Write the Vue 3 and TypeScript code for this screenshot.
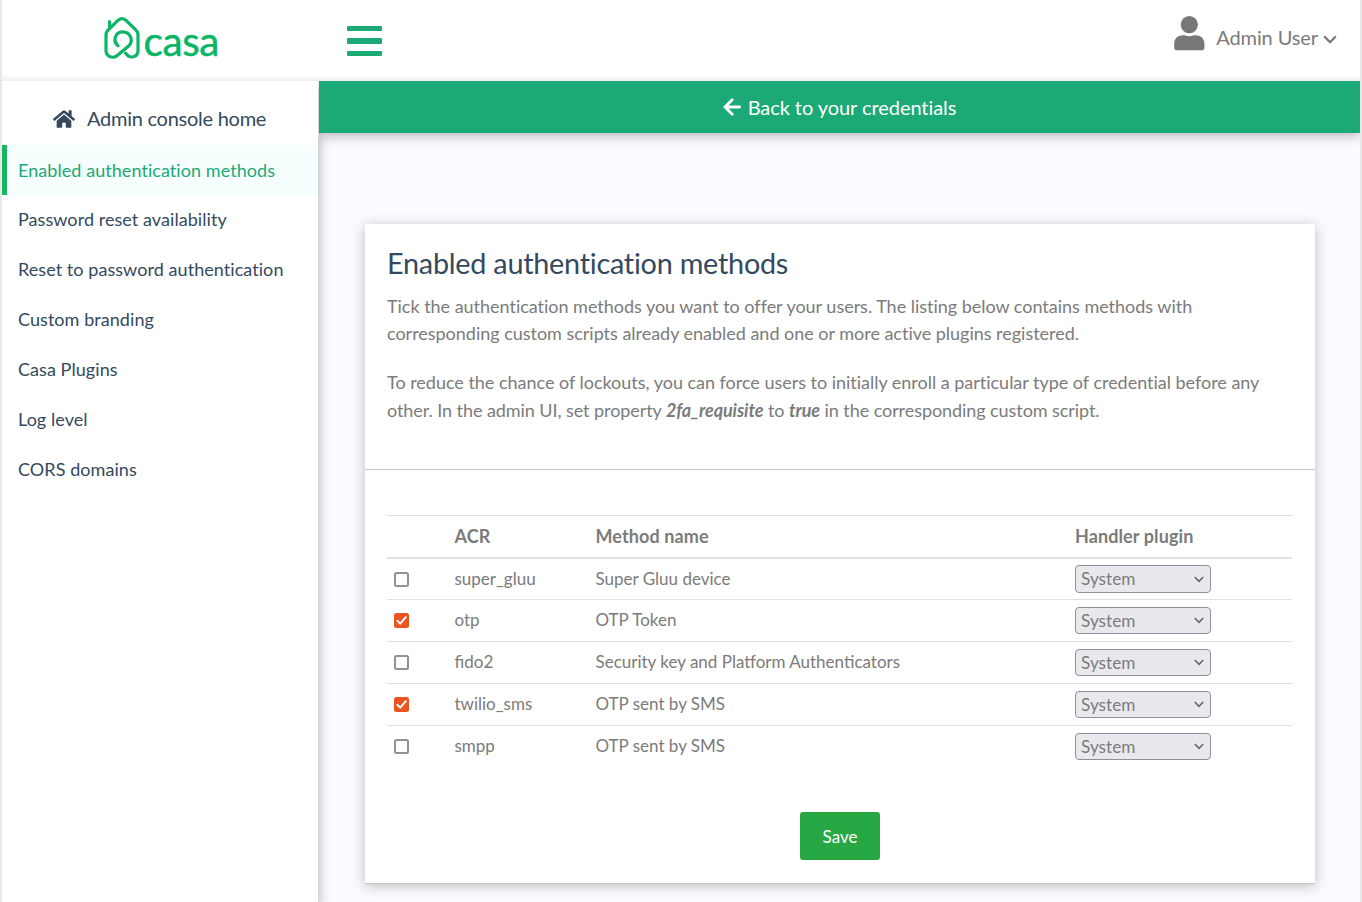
<script setup lang="ts">
import { ref } from 'vue'

interface Method {
  acr: string
  name: string
  enabled: boolean
  plugin: string
}

const links: string[] = [
  'Enabled authentication methods',
  'Password reset availability',
  'Reset to password authentication',
  'Custom branding',
  'Casa Plugins',
  'Log level',
  'CORS domains',
]
const active = ref(0)

const methods = ref<Method[]>([
  { acr: 'super_gluu', name: 'Super Gluu device', enabled: false, plugin: 'System' },
  { acr: 'otp', name: 'OTP Token', enabled: true, plugin: 'System' },
  { acr: 'fido2', name: 'Security key and Platform Authenticators', enabled: false, plugin: 'System' },
  { acr: 'twilio_sms', name: 'OTP sent by SMS', enabled: true, plugin: 'System' },
  { acr: 'smpp', name: 'OTP sent by SMS', enabled: false, plugin: 'System' },
])
</script>

<template>
  <div class="page">
    <header class="top">
      <div class="logo">
        <svg class="logo-mark" width="38" height="44" viewBox="0 0 38 44">
          <path
            d="M6.500 10.800V5.600M15 29.800C9.800 25.800 11.500 16.200 19.300 15.800C27.500 15.600 31 25 25.600 30L14.200 39.400C9.400 43.400 3 40.200 3 34.600V18.800Q3 16.200 5 14.200L15.200 4.200Q19 .9 22.800 4.200L33 14.200Q35 16.200 35 18.800V34.600C35 41.200 27 43.600 22.600 37.200"
          />
        </svg>
        <span class="logo-text">casa</span>
      </div>
      <button class="burger" aria-label="Menu"><i></i><i></i><i></i></button>
      <div class="user">
        <svg width="31" height="35" viewBox="0 0 31 35">
          <circle cx="15.300" cy="8.700" r="8.600" />
          <path d="M8.500 19.200H10.500Q15.300 21.400 20 19.200H22Q30.400 20 30.400 28V31.400Q30.400 34.200 27.400 34.200H3.200Q.2 34.200 .2 31.400V28Q.2 20 8.500 19.200Z" />
        </svg>
        <span class="user-name">Admin User</span>
        <svg class="caret" width="14" height="10" viewBox="0 0 14 10"><path d="M1.800 2L7 7.200L12.200 2" /></svg>
      </div>
    </header>

    <div class="body">
      <aside class="side">
        <a class="home">
          <svg width="22" height="20" viewBox="0 0 576 512" preserveAspectRatio="none">
            <path d="M280.400 148.300L96 300.100V464a16 16 0 0 0 16 16l112-.3a16 16 0 0 0 16-16V368a16 16 0 0 1 16-16h64a16 16 0 0 1 16 16v95.600a16 16 0 0 0 16 16l112 .4a16 16 0 0 0 16-16V300L295.700 148.300a12.200 12.200 0 0 0-15.300 0zM571.600 251.500L488 182.600V44a12 12 0 0 0-12-12h-56a12 12 0 0 0-12 12v72.600L318.500 43a48 48 0 0 0-61 0L4.300 251.500a12 12 0 0 0-1.600 16.900l25.500 31a12 12 0 0 0 16.900 1.600l235.200-193.700a12.200 12.200 0 0 1 15.300 0L530.900 301a12 12 0 0 0 16.900-1.600l25.500-31a12 12 0 0 0-1.700-16.900z" />
          </svg>
          <span>Admin console home</span>
        </a>
        <nav>
          <a v-for="(l, i) in links" :key="l" class="link" :class="{ active: i === active }" @click="active = i"><span>{{ l }}</span></a>
        </nav>
      </aside>

      <main class="main">
        <a class="back">
          <svg width="18" height="18" viewBox="0 0 18 18"><path d="M9.200 1.800L2 9L9.200 16.200M2.500 9H16.600" /></svg>
          <span>Back to your credentials</span>
        </a>

        <section class="card">
          <div class="intro">
            <h1>Enabled authentication methods</h1>
            <p>
              Tick the authentication methods you want to offer your users. The listing below contains methods with<br />
              corresponding custom scripts already enabled and one or more active plugins registered.
            </p>
            <p>
              To reduce the chance of lockouts, you can force users to initially enroll a particular type of credential before any<br />
              <span class="tight">other. In the admin UI, set property <b>2fa_requisite</b> to <b>true</b> in the corresponding custom script.</span>
            </p>
          </div>
          <div class="list">
            <div class="row head">
              <span></span><span>ACR</span><span>Method name</span><span>Handler plugin</span>
            </div>
            <div v-for="m in methods" :key="m.acr" class="row">
              <span class="check" :class="{ on: m.enabled }" role="checkbox" :aria-checked="m.enabled" @click="m.enabled = !m.enabled">
                <svg v-if="m.enabled" width="15" height="15" viewBox="0 0 15 15"><path d="M3.400 7.700L6.200 10.600L11.800 4.200" /></svg>
              </span>
              <span class="txt">{{ m.acr }}</span>
              <span class="txt">{{ m.name }}</span>
              <span class="select">
                <span>{{ m.plugin }}</span>
                <svg width="10" height="7" viewBox="0 0 10 7"><path d="M.8 1L5 5.400L9.200 1" /></svg>
              </span>
            </div>
          </div>
          <button class="save">Save</button>
        </section>
      </main>
    </div>
  </div>
</template>

<style>
body {
  margin: 0;
  overflow: hidden;
}
</style>

<style scoped>
* {
  box-sizing: border-box;
}
.page {
  width: 1362px;
  height: 902px;
  display: flex;
  flex-direction: column;
  overflow: hidden;
  border-left: 2px solid #e8e8e8;
  border-right: 2px solid #e8e8e8;
  background: #fafbff;
  font-family: Lato, sans-serif;
  color: #7b7b7b;
}
.top {
  height: 81px;
  flex: none;
  display: flex;
  align-items: flex-start;
  background: linear-gradient(#fff 74px, #fafafa 77px, #ededed);
}
.logo {
  display: flex;
  width: 345px;
  padding: 16px 0 0 101px;
}
.logo-mark {
  fill: none;
  stroke: #0ab566;
  stroke-width: 3.200;
  stroke-linecap: round;
  stroke-linejoin: round;
}
.logo-text {
  margin: -1px 0 0 2.500px;
  font-size: 40.500px;
  line-height: 52px;
  letter-spacing: -0.400px;
  color: #0ab566;
  -webkit-text-stroke: 0.5px #0ab566;
}
.burger {
  display: flex;
  flex-direction: column;
  gap: 7px;
  width: 35px;
  margin-top: 26px;
  padding: 0;
  border: 0;
  background: none;
}
.burger i {
  height: 5.400px;
  border-radius: 1px;
  background: #1ba975;
}
.user {
  display: flex;
  margin: 16px 23px 0 auto;
}
.user svg {
  fill: #777;
}
.user-name {
  margin: 7px 5px 0 11px;
  font-size: 20px;
  line-height: 28px;
  letter-spacing: -0.1px;
}
.user > svg:first-child {
  margin-right: 0.500px;
}
.user .caret {
  margin-top: 18.500px;
  fill: none;
  stroke: #777;
  stroke-width: 2.300;
  stroke-linecap: round;
}
.body {
  flex: 1;
  display: flex;
}
.side {
  width: 316px;
  margin-right: 1px;
  background: #fff;
  box-shadow: 2px 4px 10px rgba(0, 0, 0, 0.25);
  clip-path: inset(0 -20px 0 0);
  color: #34495e;
}
.home {
  height: 64px;
  display: flex;
  align-items: center;
  gap: 12px;
  padding: 12px 0 0 51px;
  font-size: 20px;
  letter-spacing: -0.260px;
}
.home span {
  padding-bottom: 2px;
}
.home svg {
  fill: #34495e;
}
.link {
  display: flex;
  align-items: center;
  height: 50px;
  padding-left: 16px;
  font-size: 18px;
  letter-spacing: 0.060px;
}
.link span {
  padding-bottom: 2px;
}
.link.active span {
  padding-bottom: 0;
}
.link.active {
  padding-left: 11px;
  border-left: 5px solid #18b566;
  background: #f6fffe;
  color: #1ba975;
}
.main {
  flex: 1;
  display: flex;
  flex-direction: column;
}
.back {
  height: 52px;
  display: flex;
  align-items: center;
  justify-content: center;
  gap: 7px;
  background: #1ba975;
  box-shadow: 0 2px 12px rgba(0, 0, 0, 0.3);
  clip-path: inset(0 0 -20px 0);
  color: #fff;
  font-size: 20px;
  letter-spacing: -0.060px;
}
.back svg {
  fill: none;
  stroke: #fff;
  stroke-width: 2.800;
  stroke-linecap: round;
}
.card {
  display: flex;
  flex-direction: column;
  width: 950px;
  height: 660px;
  margin: 91px 0 0 46px;
  background: #fff;
  border-bottom: 1px solid #c8c8c8;
  box-shadow: 0 2px 12px rgba(0, 0, 0, 0.25);
}
.intro {
  height: 246px;
  padding: 21px 22px 0;
  border-bottom: 1px solid #c8c8c8;
}
h1 {
  margin: 0 0 11.500px;
  font-size: 28.800px;
  line-height: 36px;
  font-weight: 400;
  letter-spacing: -0.240px;
  color: #34495e;
}
p {
  margin: 0 0 21.500px;
  font-size: 18px;
  line-height: 27.500px;
  letter-spacing: -0.020px;
  white-space: nowrap;
}
.tight {
  letter-spacing: -0.070px;
}
p b {
  font-style: italic;
  letter-spacing: -0.100px;
}
.list {
  margin: 45px 23px 0 22px;
  border-top: 1px solid #dee2e6;
}
.row {
  display: grid;
  grid-template-columns: 67.500px 141px 479.500px 1fr;
  align-items: center;
  height: 42px;
  border-bottom: 1px solid #dee2e6;
  font-size: 17px;
}
.row.head {
  height: 43px;
  padding-bottom: 1px;
  border-bottom-width: 2px;
  font-size: 18px;
  font-weight: 700;
  letter-spacing: 0.100px;
}
.row:nth-child(2) {
  height: 41px;
}
.row:last-child {
  border-bottom-color: transparent;
}
.txt {
  padding-bottom: 2px;
}
.check {
  width: 15px;
  height: 15px;
  margin-left: 7px;
  border: 2px solid #8f8f9d;
  border-radius: 2.500px;
}
.check.on {
  border: 0;
  background: #e95420;
}
.check svg {
  display: block;
  fill: none;
  stroke: #fff;
  stroke-width: 2;
  stroke-linecap: round;
  stroke-linejoin: round;
}
.select {
  display: flex;
  align-items: center;
  justify-content: space-between;
  width: 136px;
  height: 27px;
  padding: 0 6px 0 5px;
  border: 1px solid #8f8f9d;
  border-radius: 4px;
  background: #e9e9ed;
  font-size: 17.200px;
}
.row:nth-child(2) .select {
  height: 28px;
}
.row:nth-child(2) .select span {
  padding-bottom: 2px;
}
.select svg {
  fill: none;
  stroke: #666;
  stroke-width: 1.600;
}
.save {
  width: 80px;
  height: 48px;
  margin: 44px auto 0;
  padding: 1px 0 0;
  border: 0;
  border-radius: 3px;
  background: #28a745;
  color: #fff;
  font: 17px/47px Lato, sans-serif;
}
</style>
